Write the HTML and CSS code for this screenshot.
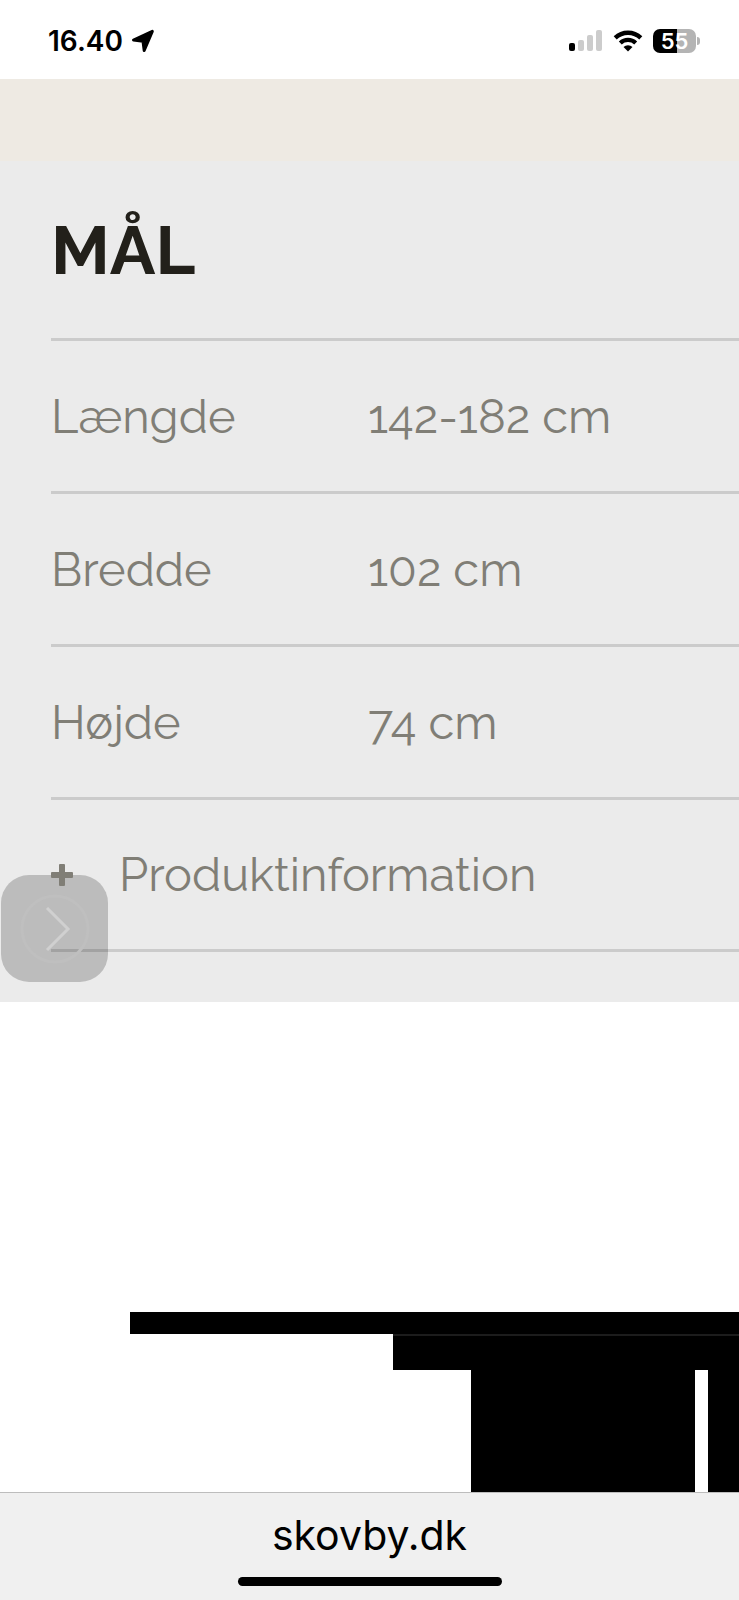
FILE: index.html
```html
<!DOCTYPE html>
<html lang="da">
<head>
    <meta charset="utf-8">
    <meta name="viewport" content="width=device-width, initial-scale=1">
    <title>skovby.dk</title>
    <link rel="stylesheet" href="styles.css">
</head>
<body>
<header class="status-bar">
    <div class="status-left">
        <span class="time">16.40</span>
        <svg class="icon-location" width="24" height="24" viewBox="0 0 24 24" aria-hidden="true">
            <path d="M2.5 11 L21.3 2.4 L13.2 21.5 L12 12.2 Z" stroke="#000" stroke-width="3" stroke-linejoin="round"/>
        </svg>
    </div>
    <div class="status-right">
        <svg width="34" height="22" viewBox="0 0 34 22" aria-hidden="true">
            <rect x="0" y="13" width="6" height="8" rx="2"/>
            <rect x="9" y="10" width="6" height="11" rx="2" fill="#cccccc"/>
            <rect x="18" y="5" width="6" height="16" rx="2" fill="#cccccc"/>
            <rect x="27" y="0" width="6" height="21" rx="2" fill="#cccccc"/>
        </svg>
        <svg class="icon-wifi" width="30" height="22" viewBox="0 0 30 22" aria-hidden="true">
            <path d="M2.2 7.8 A18.6 18.6 0 0 1 27.8 7.8" fill="none" stroke="#000" stroke-width="4.4"/>
            <path d="M7.3 13 A11.2 11.2 0 0 1 22.7 13" fill="none" stroke="#000" stroke-width="4.2"/>
            <path d="M10.5 17 A6.4 6.4 0 0 1 19.5 17 L15 21.5 Z"/>
        </svg>
        <div class="battery"><span>55</span></div>
    </div>
</header>

<main class="page">
    <div class="banner"></div>

    <section class="dimensions">
        <h2>MÅL</h2>
        <table>
            <tr>
                <th scope="row">Længde</th>
                <td>142-182 cm</td>
            </tr>
            <tr>
                <th scope="row">Bredde</th>
                <td>102 cm</td>
            </tr>
            <tr>
                <th scope="row">Højde</th>
                <td>74 cm</td>
            </tr>
        </table>
        <button class="accordion" type="button" aria-expanded="false">
            <svg class="icon-plus" width="22" height="22" viewBox="0 0 22 22" aria-hidden="true">
                <path d="M9 0h4q1 0 1 1v7h7q1 0 1 1v4q0 1-1 1h-7v7q0 1-1 1h-4q-1 0-1-1v-7h-7q-1 0-1-1v-4q0-1 1-1h7v-7q0-1 1-1z" fill="#807e76"/>
            </svg>
            Produktinformation
        </button>
        <button class="next" type="button" aria-label="Næste">
            <svg width="70" height="70" viewBox="0 0 70 70" fill="none" aria-hidden="true">
                <circle cx="35" cy="35" r="33" stroke="#bfbfbf" stroke-width="3"/>
                <path d="M27 14 L48 35 L27 56" stroke="#d0d0d0" stroke-width="3"/>
            </svg>
        </button>
    </section>

    <section class="drawing">
        <svg viewBox="0 0 739 180" preserveAspectRatio="xMinYMin slice" aria-hidden="true">
            <path d="M130 0H739V180H708V58H695V180H471V58H393V22H130Z"/>
            <path d="M393 23H739" stroke="#1c1c1c" stroke-width="2"/>
        </svg>
    </section>
</main>

<footer class="browser-bar">
    <a href="#">skovby.dk</a>
    <div class="home-indicator"></div>
</footer>
</body>
</html>
```

FILE: styles.css
```css
* {
    box-sizing: border-box;
}

body {
    display: flex;
    flex-direction: column;
    min-height: 100vh;
    margin: 0;
    background: #ffffff;
    color: #000000;
    font-family: Inter, "Liberation Sans", sans-serif;
}

.status-bar {
    display: flex;
    justify-content: space-between;
    align-items: center;
    height: 79px;
    padding: 2px 39px 0 48px;
}

.status-left,
.status-right {
    display: flex;
    align-items: center;
}

.status-left {
    gap: 8px;
}

.status-right {
    gap: 10px;
}

.time {
    font-size: 28px;
    font-weight: 600;
}

.battery {
    position: relative;
    width: 43px;
    height: 24px;
    margin-right: 4px;
    border-radius: 7px;
    background: linear-gradient(to right, #000000 56%, #b4b4b4 56%);
    color: #ffffff;
    font-size: 22px;
    font-weight: 600;
    line-height: 24px;
    text-align: center;
}

.battery:after {
    content: "";
    position: absolute;
    top: 8px;
    right: -4px;
    width: 3px;
    height: 8px;
    border-radius: 0 3px 3px 0;
    background: #b4b4b4;
}

.page {
    display: flex;
    flex: 1;
    flex-direction: column;
}

.banner {
    height: 82px;
    background: #eeeae3;
}

.dimensions {
    position: relative;
    padding: 0 0 50px 51px;
    background: #ebebeb;
    color: #807e76;
    font-family: Raleway, Lato, sans-serif;
    font-size: 47px;
    font-weight: 400;
}

.dimensions h2 {
    margin: 0;
    padding: 49px 0 48px;
    color: #22201a;
    font-size: 68px;
    font-weight: 700;
    line-height: 80px;
}

.dimensions table {
    width: 100%;
    border-collapse: separate;
    border-spacing: 0;
    font-variant-numeric: oldstyle-nums;
}

.dimensions th,
.dimensions td {
    height: 153px;
    padding: 0;
    border-top: 3px solid #cbcbcb;
    font-weight: 400;
    text-align: left;
}

.dimensions th {
    width: 317px;
}

.accordion {
    display: flex;
    align-items: center;
    gap: 46px;
    width: 100%;
    height: 155px;
    padding: 0;
    border: 0 solid #cbcbcb;
    border-width: 3px 0;
    background: none;
    color: inherit;
    font: inherit;
}

/* keeps the plus on top of the floating button */
.icon-plus {
    position: relative;
    z-index: 1;
}

.next {
    position: absolute;
    bottom: 20px;
    left: 1px;
    display: flex;
    align-items: center;
    justify-content: center;
    width: 107px;
    height: 107px;
    padding: 0;
    border: 0;
    border-radius: 28px;
    background: rgba(0, 0, 0, 0.2);
}

.drawing {
    display: flex;
    flex: 1;
    padding-top: 310px;
}

.drawing svg {
    width: 100%;
    height: 180px;
}

.browser-bar {
    display: flex;
    flex-direction: column;
    align-items: center;
    height: 108px;
    border-top: 1px solid #bdbdbd;
    background: #f0f0f0;
}

.browser-bar a {
    margin-top: 14px;
    color: #000000;
    font-size: 41px;
    line-height: 56px;
    text-decoration: none;
}

.home-indicator {
    width: 264px;
    height: 9px;
    margin-top: 14px;
    border-radius: 5px;
    background: #000000;
}
```
